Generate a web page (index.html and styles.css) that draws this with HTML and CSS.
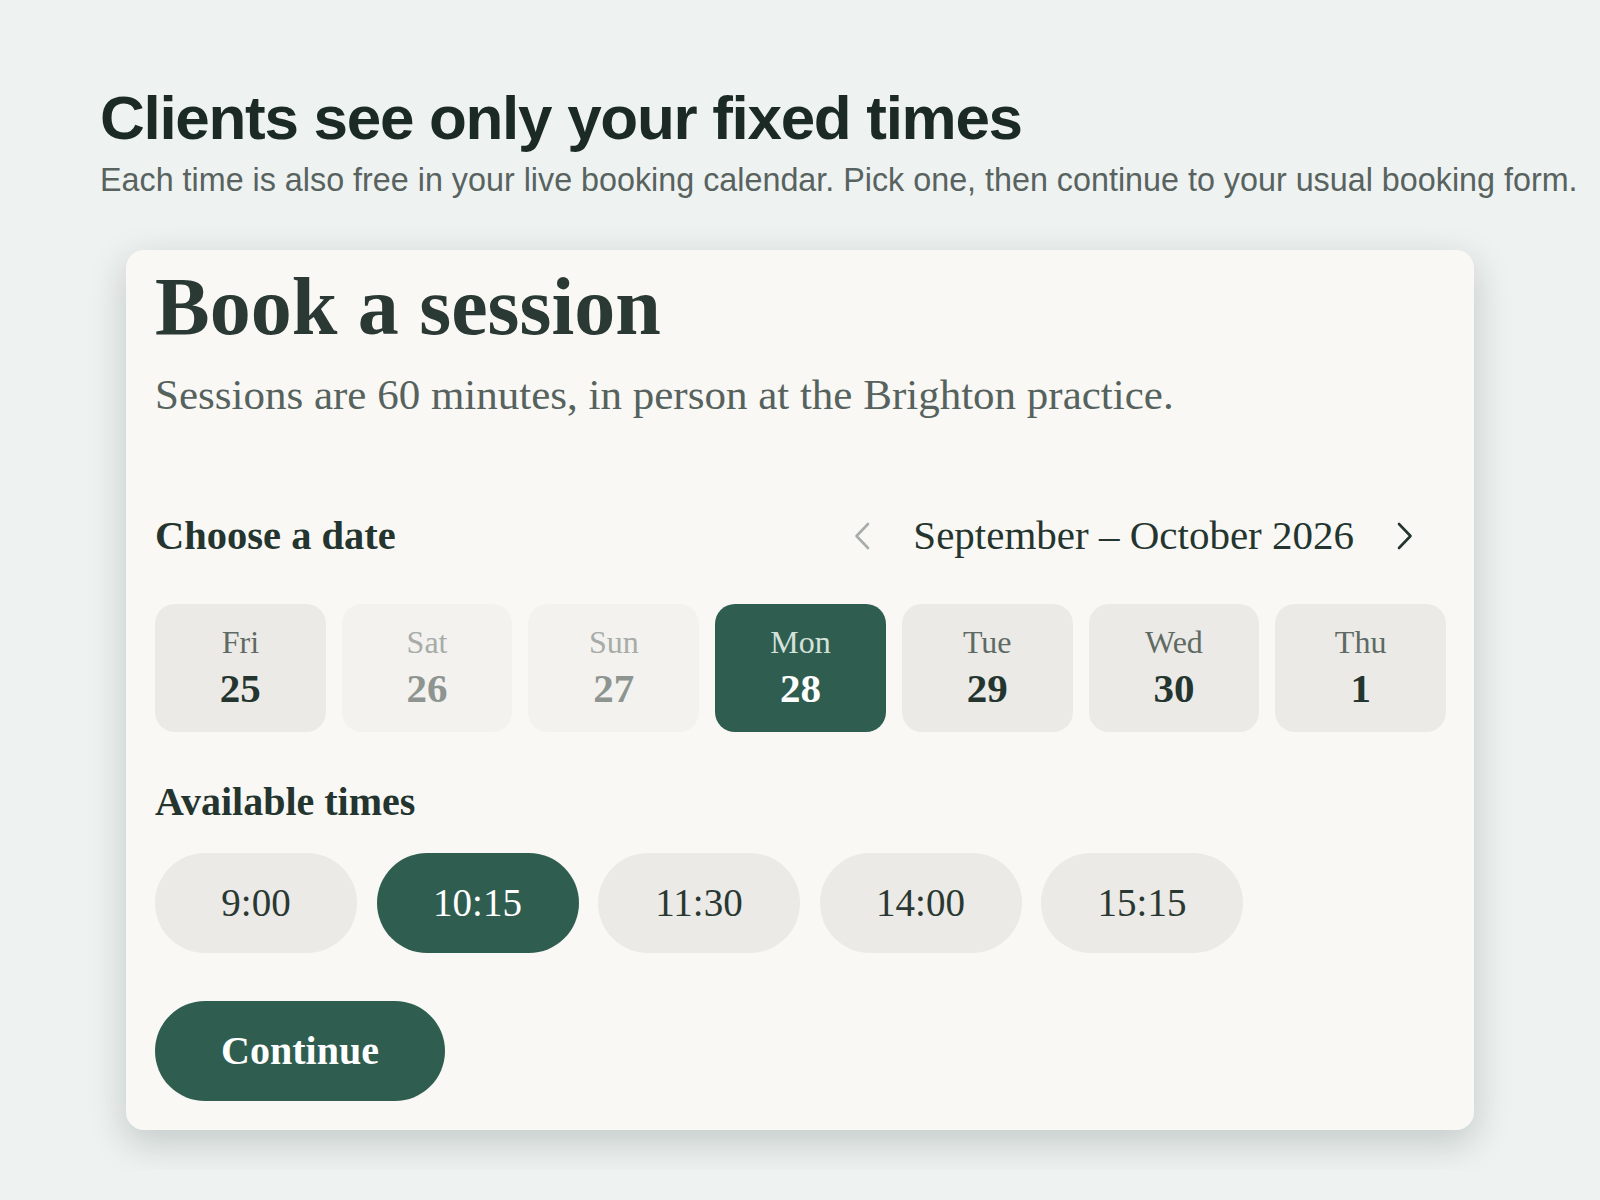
FILE: index.html
```html
<!DOCTYPE html>
<html lang="en">
<head>
<meta charset="utf-8">
<title>Book a session</title>
<link rel="stylesheet" href="styles.css">
</head>
<body>
<div class="page">
  <h1 class="hero-title">Clients see only your fixed times</h1>
  <p class="hero-sub">Each time is also free in your live booking calendar. Pick one, then continue to your usual booking form.</p>

  <section class="card">
    <h2 class="card-title">Book a session</h2>
    <p class="card-sub">Sessions are 60 minutes, in person at the Brighton practice.</p>

    <div class="date-head">
      <h3 class="section-label">Choose a date</h3>
      <div class="month-nav">
        <button class="nav-btn is-disabled" aria-label="Previous">
          <svg width="16" height="28" viewBox="0 0 16 28"><path d="M14 2 L2.5 14 L14 26" /></svg>
        </button>
        <span class="month-label">September – October 2026</span>
        <button class="nav-btn" aria-label="Next">
          <svg width="16" height="28" viewBox="0 0 16 28"><path d="M2 2 L13.5 14 L2 26" /></svg>
        </button>
      </div>
    </div>

    <div class="days">
      <button class="day"><span class="day-name">Fri</span><span class="day-num">25</span></button>
      <button class="day is-off"><span class="day-name">Sat</span><span class="day-num">26</span></button>
      <button class="day is-off"><span class="day-name">Sun</span><span class="day-num">27</span></button>
      <button class="day is-selected"><span class="day-name">Mon</span><span class="day-num">28</span></button>
      <button class="day"><span class="day-name">Tue</span><span class="day-num">29</span></button>
      <button class="day"><span class="day-name">Wed</span><span class="day-num">30</span></button>
      <button class="day"><span class="day-name">Thu</span><span class="day-num">1</span></button>
    </div>

    <h3 class="section-label times-label">Available times</h3>
    <div class="times">
      <button class="time">9:00</button>
      <button class="time is-selected">10:15</button>
      <button class="time">11:30</button>
      <button class="time">14:00</button>
      <button class="time">15:15</button>
    </div>

    <button class="continue">Continue</button>
  </section>
</div>
</body>
</html>
```

FILE: styles.css
```css
html {
  background: #eef2f1;
}

body {
  margin: 0;
}

.page {
  padding: 84px 100px 40px;
  overflow: hidden;
}

.hero-title {
  margin: 0;
  font-family: "Liberation Sans", Arial, sans-serif;
  font-weight: 700;
  font-size: 62px;
  line-height: 1.1;
  letter-spacing: -0.021em;
  color: #1b2a24;
}

.hero-sub {
  margin: 8px 0 0;
  font-family: "Liberation Sans", Arial, sans-serif;
  font-size: 32.3px;
  line-height: 1.3;
  color: #58635f;
  white-space: nowrap;
}

.card {
  box-sizing: border-box;
  width: 1348px;
  margin: 48px auto 0;
  padding: 12px 28px 29px 29px;
  background: #f9f8f5;
  border-radius: 18px;
  box-shadow: 0 12px 36px rgba(30, 48, 42, 0.21);
  font-family: "Liberation Serif", "Times New Roman", serif;
  color: #24352f;
}

.card button {
  font-family: inherit;
  border: none;
  margin: 0;
  cursor: pointer;
}

.card-title {
  margin: 0;
  font-size: 82px;
  font-weight: 700;
  line-height: 1.1;
  color: #2a3934;
}

.card-sub {
  margin: 17px 0 0;
  font-size: 43px;
  line-height: 1.2;
  color: #56625d;
}

.date-head {
  display: flex;
  align-items: center;
  justify-content: space-between;
  height: 52px;
  margin-top: 89px;
}

.section-label {
  margin: 0;
  font-size: 40.5px;
  font-weight: 700;
  line-height: 1.2;
  color: #24352f;
}

.month-nav {
  display: flex;
  align-items: center;
  gap: 43px;
  margin-right: 33px;
}

.month-label {
  font-size: 41px;
  line-height: 1.2;
  color: #24352f;
}

.nav-btn {
  display: flex;
  padding: 0;
  background: none;
}

.nav-btn svg path {
  fill: none;
  stroke: #24352f;
  stroke-width: 2.6;
  stroke-linecap: round;
  stroke-linejoin: round;
}

.nav-btn.is-disabled svg path {
  stroke: #a8adaa;
}

.days {
  display: grid;
  grid-template-columns: repeat(7, 1fr);
  gap: 16px;
  margin-top: 42px;
}

.day {
  display: flex;
  flex-direction: column;
  align-items: center;
  gap: 3px;
  padding: 19px 0 18px;
  border-radius: 20px;
  background: #ebeae6;
}

.day-name {
  font-size: 32px;
  line-height: 1.2;
  color: #5f6a65;
}

.day-num {
  font-size: 41px;
  font-weight: 700;
  line-height: 1.2;
  color: #24352f;
}

.day.is-off {
  background: #f3f2ee;
}

.day.is-off .day-name {
  color: #a7aca9;
}

.day.is-off .day-num {
  color: #8e9591;
}

.day.is-selected {
  background: #2f5e50;
}

.day.is-selected .day-name {
  color: #d5e2dc;
}

.day.is-selected .day-num {
  color: #ffffff;
}

.times-label {
  font-size: 40px;
  margin-top: 46px;
}

.times {
  display: flex;
  gap: 19.5px;
  margin-top: 27px;
}

.time {
  width: 202px;
  height: 100px;
  padding: 0;
  border-radius: 50px;
  background: #ebeae6;
  font-size: 39px;
  color: #2a3833;
}

.time.is-selected {
  background: #2f5e50;
  color: #ffffff;
}

.continue {
  display: block;
  margin-top: 48px !important;
  width: 290px;
  height: 100px;
  padding: 0;
  border-radius: 50px;
  background: #2f5e50;
  color: #ffffff;
  font-size: 40px;
  font-weight: 700;
}
```
